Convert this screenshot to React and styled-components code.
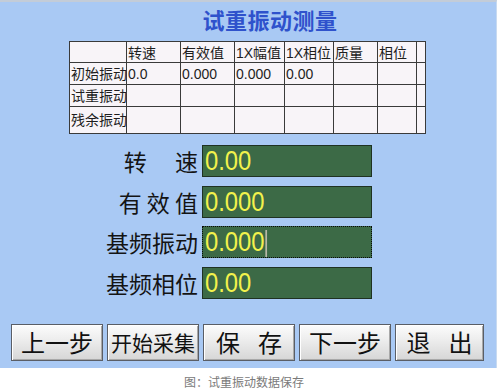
import React from "react";
import styled, { createGlobalStyle } from "styled-components";

const GlobalStyle = createGlobalStyle`
  html, body { margin: 0; padding: 0; background: #ffffff; }
  body { font-family: "Liberation Sans", "Noto Sans CJK SC", sans-serif; }
`;

const Page = styled.div`
  width: 502px;
  height: 389px;
  overflow: hidden;
  background: #ffffff;
`;

const Panel = styled.div`
  width: 497px;
  height: 368px;
  box-sizing: border-box;
  background: #a9c9f4;
  border-top: 2px solid #c3ccd8;
  border-right: 1px solid #c8daf0;
  display: flex;
  flex-direction: column;
`;

const Title = styled.div`
  padding: 4px 0 0 44px;
  height: 26px;
  line-height: 26px;
  margin-bottom: 9px;
  text-align: center;
  font-family: "Noto Sans CJK SC", sans-serif;
  font-size: 22px;
  font-weight: 700;
  color: #2f52cc;
  letter-spacing: 0.5px;
`;

const Grid = styled.div`
  margin-left: 69px;
  display: grid;
  grid-template-columns: 57px 54px 54px 50px 49px 44px 39px 9px;
  grid-template-rows: 21px 22px 22px 27px;
  width: max-content;
  border-left: 1px solid #3a3a3a;
  border-top: 1px solid #3a3a3a;
  background: #f8f4f8;
`;

const Cell = styled.div`
  border-right: 1px solid #3a3a3a;
  border-bottom: 1px solid #3a3a3a;
  display: flex;
  align-items: ${(p) => (p.$head ? "flex-end" : "center")};
  padding-left: 1px;
  font-size: 14px;
  line-height: 18px;
  color: #1e1e1e;
  white-space: nowrap;
  overflow: hidden;
`;

const Form = styled.div`
  display: grid;
  grid-template-columns: 98px 170px;
  grid-auto-rows: 32px;
  column-gap: 4px;
  row-gap: 8.67px;
  margin: 11px 0 0 100px;
`;

const Label = styled.div`
  justify-self: end;
  align-self: center;
  font-family: "Noto Sans CJK SC", sans-serif;
  font-size: 23px;
  line-height: 32px;
  color: #141414;
  white-space: pre;
`;

const Field = styled.div`
  box-sizing: border-box;
  background: #3c6a46;
  border: 1px ${(p) => (p.$focused ? "dotted #0a0a0a" : "solid #1f3222")};
  display: flex;
  align-items: center;
  padding-left: 2px;
  overflow: hidden;
`;

const Value = styled.span`
  display: inline-block;
  font-family: "Liberation Sans", sans-serif;
  font-size: 28px;
  line-height: 30px;
  color: #f2f24c;
  transform: scaleX(0.85);
  transform-origin: left center;
  white-space: nowrap;
`;

const Caret = styled.span`
  display: inline-block;
  width: 2px;
  height: 27px;
  margin-left: 1px;
  vertical-align: middle;
  background: #b8b8a8;
`;

const ButtonRow = styled.div`
  display: flex;
  gap: 4px;
  margin-top: 25px;
  padding-left: 11px;
`;

const Button = styled.button`
  width: ${(p) => p.$w || 92}px;
  height: 37px;
  box-sizing: border-box;
  padding: 0;
  border: 1px solid #5a5e66;
  box-shadow: inset 1px 1px 0 #ffffff, inset -1px -1px 0 #a8a8a8;
  background: linear-gradient(#fcfcfc, #ececec 45%, #d6d6d6);
  display: flex;
  align-items: center;
  justify-content: center;
  gap: ${(p) => p.$gap || 0}px;
  font-family: "Noto Sans CJK SC", sans-serif;
  font-size: ${(p) => p.$size || 24}px;
  color: #111111;
  line-height: 1;
  cursor: pointer;
`;

const Caption = styled.div`
  padding: 8px 14px 0 0;
  text-align: center;
  font-family: "Noto Sans CJK SC", sans-serif;
  font-size: 12px;
  line-height: 12px;
  color: #7a7a7a;
`;

const header = ["", "转速", "有效值", "1X幅值", "1X相位", "质量", "相位", ""];
const rows = [
  ["初始振动", "0.0", "0.000", "0.000", "0.00", "", "", ""],
  ["试重振动", "", "", "", "", "", "", ""],
  ["残余振动", "", "", "", "", "", "", ""],
];

const fields = [
  { label: "转\u3000 速", value: "0.00" },
  { label: "有 效 值", value: "0.000" },
  { label: "基频振动", value: "0.000", focused: true },
  { label: "基频相位", value: "0.00" },
];

const buttons = [
  { parts: ["上一步"] },
  { parts: ["开始采集"], size: 21 },
  { parts: ["保", "存"], gap: 18 },
  { parts: ["下一步"] },
  { parts: ["退", "出"], gap: 18, w: 89 },
];

export default function App() {
  return (
    <Page>
      <GlobalStyle />
      <Panel>
        <Title>试重振动测量</Title>
        <Grid>
          {header.map((h, i) => (
            <Cell key={"h" + i} $head>
              {h}
            </Cell>
          ))}
          {rows.map((r, ri) =>
            r.map((c, ci) => <Cell key={ri + "-" + ci}>{c}</Cell>)
          )}
        </Grid>
        <Form>
          {fields.map((f) => (
            <React.Fragment key={f.label}>
              <Label>{f.label}</Label>
              <Field $focused={f.focused}>
                <Value>
                  {f.value}
                  {f.focused && <Caret />}
                </Value>
              </Field>
            </React.Fragment>
          ))}
        </Form>
        <ButtonRow>
          {buttons.map((b, i) => (
            <Button key={i} $size={b.size} $gap={b.gap} $w={b.w}>
              {b.parts.map((p) => (
                <span key={p}>{p}</span>
              ))}
            </Button>
          ))}
        </ButtonRow>
      </Panel>
      <Caption>图：试重振动数据保存</Caption>
    </Page>
  );
}
